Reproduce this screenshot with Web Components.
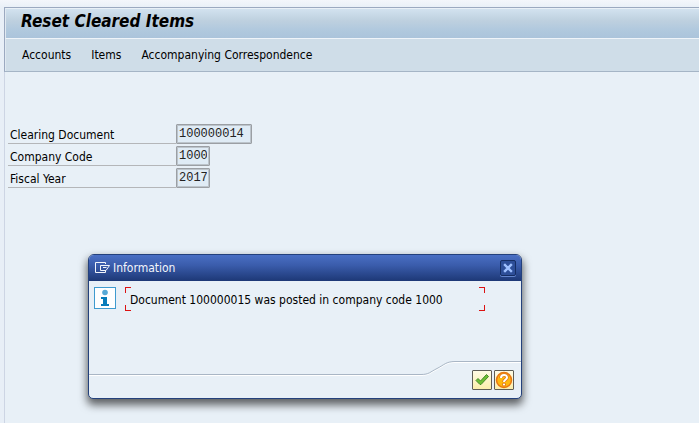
<!DOCTYPE html>
<html lang="en">
<head>
<meta charset="utf-8">
<title>Reset Cleared Items</title>
<style>
    html, body {
        height: 100%;
    }

    body {
        margin: 0;
        background: linear-gradient(#f3f6fb, #e8eff7 8px);
        color: #000;
        font: 12px/16px "DejaVu Sans Condensed", "DejaVu Sans", sans-serif;
        overflow: hidden;
    }
</style>
</head>
<body>
<sap-screen heading="Reset Cleared Items">
    <menu-link slot="menu">Accounts</menu-link>
    <menu-link slot="menu">Items</menu-link>
    <menu-link slot="menu">Accompanying Correspondence</menu-link>

    <form-field label="Clearing Document" value="100000014" size="long"></form-field>
    <form-field label="Company Code" value="1000"></form-field>
    <form-field label="Fiscal Year" value="2017"></form-field>

    <info-dialog slot="dialog" heading="Information">Document 100000015 was posted in company code 1000</info-dialog>
</sap-screen>

<template id="screen_template">
    <style>
        :host {
            display: block;
            position: relative;
            box-sizing: border-box;
            min-height: 100%;
            padding: 7px 0 0 4px;
        }

        .frame {
            box-sizing: border-box;
            min-height: calc(100vh - 7px);
            border-left: 1px solid #cdd5e4;
            background: #e8f0f7;
        }

        header {
            border: 1px solid #9ba9c0;
            border-width: 1px 0 1px 1px;
            border-bottom-color: #a5b5c6;
            margin-left: -1px;
            background: #cfdde8;
        }

        h1 {
            margin: 0;
            padding: 3px 15px 7px;
            border-top: 1px solid #e9f0f7;
            border-bottom: 1px solid #eff4f9;
            border-left: 1px solid #e0e9f1;
            background: linear-gradient(#d2e2ef, #bed0df 40%, #b1c9de 70%, #abc4db);
            font-size: 17px;
            line-height: 19px;
            font-style: italic;
            font-weight: bold;
        }

        nav {
            display: flex;
            gap: 20px;
            padding: 8px 16px;
            border-left: 1px solid #e0e9f1;
        }

        main {
            padding: 52px 0 0 3px;
            display: grid;
            gap: 2px;
        }
    </style>
    <div class="frame">
        <header>
            <h1></h1>
            <nav><slot name="menu"></slot></nav>
        </header>
        <main><slot></slot></main>
    </div>
    <slot name="dialog"></slot>
</template>

<template id="menu_template">
    <style>
        :host {
            display: block;
        }

        a {
            color: inherit;
            text-decoration: none;
        }
    </style>
    <a href="#"><slot></slot></a>
</template>

<template id="field_template">
    <style>
        :host {
            --field-width: 34px;
            display: flex;
            height: 20px;
        }

        :host([size="long"]) {
            --field-width: 76px;
        }

        label {
            box-sizing: border-box;
            width: 168px;
            padding: 3px 0 0 2px;
            border-bottom: 1px solid #b4b6b9;
        }

        input {
            box-sizing: border-box;
            width: var(--field-width);
            margin: 0;
            padding: 1px 2px;
            border: 1px solid #9b9fa4;
            border-radius: 1px;
            outline: none;
            background: #dfebf5;
            box-shadow: inset 0 0 0 1px #bcc4cb;
            color: #222;
            font: 12px/16px "Liberation Mono", monospace;
        }
    </style>
    <label for="f_input"></label>
    <input id="f_input" type="text" readonly>
</template>

<template id="dialog_template">
    <style>
        :host {
            position: absolute;
            top: 254px;
            left: 88px;
            display: block;
            box-sizing: border-box;
            width: 434px;
            border: 1px solid #24417c;
            border-radius: 6px 6px 5px 5px;
            background: #e8f0f7;
            box-shadow: 0 5px 9px 1px rgba(0, 0, 0, 0.6);
            overflow: hidden;
        }

        .title {
            display: flex;
            align-items: center;
            gap: 3px;
            height: 26px;
            padding: 0 5px 0 6px;
            background: linear-gradient(#4a6fc4, #3a5cab 40%, #1d3876);
            color: #f2f5fb;
        }

        h2 {
            flex: 1;
            margin: 0;
            font-size: 12px;
            font-weight: normal;
        }

        button {
            display: grid;
            place-items: center;
            box-sizing: border-box;
            margin: 0;
            padding: 0;
        }

        svg {
            display: block;
        }

        .close {
            width: 16px;
            height: 16px;
            border: 1px solid #152d63;
            border-radius: 2px;
            background: #2d4e98;
            box-shadow: 0 1px 0 #6283cb;
        }

        .content {
            display: flex;
            gap: 9px;
            min-height: 74px;
            padding: 6px 5px 0;
        }

        .message {
            display: grid;
            box-sizing: border-box;
            width: 360px;
            height: 24px;
            padding: 5px 5px 0;
            margin: 0;
            --red: linear-gradient(#dc1212, #dc1212);
            background:
                var(--red) 0 0 / 6px 1px, var(--red) 0 0 / 1px 6px,
                var(--red) 100% 0 / 6px 1px, var(--red) 100% 0 / 1px 6px,
                var(--red) 0 100% / 6px 1px, var(--red) 0 100% / 1px 6px,
                var(--red) 100% 100% / 6px 1px, var(--red) 100% 100% / 1px 6px;
            background-repeat: no-repeat;
            white-space: nowrap;
        }

        footer {
            display: grid;
            grid-template-columns: 1fr 34px 66px;
        }

        .low {
            height: 13px;
            border-bottom: 1px solid #a9b6c5;
            box-shadow: 0 1px 0 #fff;
        }

        .high {
            border-top: 1px solid #a9b6c5;
            box-shadow: inset 0 1px 0 #fff;
        }

        .actions {
            display: flex;
            justify-content: end;
            gap: 2px;
            padding: 8px 7px 8px 0;
        }

        .actions button {
            width: 20px;
            height: 20px;
            border: 1px solid #5f5d55;
            border-radius: 1px;
            background: linear-gradient(#fffbe4, #fbeeab);
        }
    </style>
    <div class="title">
        <svg width="15" height="12" viewBox="0 0 15 12" fill="none" stroke="#f2f5fb" stroke-width="1">
            <path d="M10.500 2V.5H.5v10h10V9"/>
            <path d="M5.500 8.500v-5h9L11 8.500H5.500M8 5.500h3.500"/>
        </svg>
        <h2></h2>
        <button class="close" type="button" aria-label="Close">
            <svg width="10" height="10" viewBox="0 0 10 10">
                <path d="M2 2l6 6M8 2L2 8" stroke="#9fc0ff" stroke-width="2.400" stroke-linecap="square"/>
            </svg>
        </button>
    </div>
    <div class="content">
        <svg width="22" height="22" viewBox="0 0 22 22">
            <rect x=".5" y=".5" width="21" height="21" fill="#fff" stroke="#3f9bcf"/>
            <circle cx="11" cy="5.500" r="2.800" fill="#57a9d6"/>
            <path d="M7 10h6v7h2v2H7v-2h2v-5H7z" fill="#087cba"/>
        </svg>
        <p class="message"><slot></slot></p>
    </div>
    <footer>
        <div class="low"></div>
        <svg width="34" height="15" viewBox="0 0 34 15" fill="none">
            <path d="M0 14.500C8 14.500 9 12 16 8.500S25 1.500 34 1.500" stroke="#fff"/>
            <path d="M0 13.500C8 13.500 9 11 16 7.500S25 .5 34 .5" stroke="#a9b6c5"/>
        </svg>
        <div class="high">
            <div class="actions">
                <button type="button" aria-label="Continue">
                    <svg width="16" height="16" viewBox="0 0 16 16">
                        <path d="M2 8.500l2-2 2.500 2.500L12.500 2.500l2 2L7 12.500H6z" fill="#6fbe35" stroke="#458a28"/>
                    </svg>
                </button>
                <button type="button" aria-label="Help">
                    <svg width="18" height="18" viewBox="0 0 18 18">
                        <circle cx="9" cy="9" r="7.500" fill="#ffb90e" stroke="#e97712" stroke-width="1.500"/>
                        <path d="M6 7c0-4 6-4 6-.5C12 8.500 9 8.500 9 11" fill="none" stroke="#e27a1c" stroke-width="3.600"/>
                        <circle cx="9" cy="13.500" r="1.900" fill="#e27a1c"/>
                        <path d="M6 7c0-4 6-4 6-.5C12 8.500 9 8.500 9 11" fill="none" stroke="#fff" stroke-width="2"/>
                        <circle cx="9" cy="13.500" r="1.100" fill="#fff"/>
                    </svg>
                </button>
            </div>
        </div>
    </footer>
</template>

<script>
    class TemplateElement extends HTMLElement {
        constructor(templateId) {
            super();
            const template = document.getElementById(templateId);
            this.attachShadow({mode: "open"});
            this.shadowRoot.append(template.content.cloneNode(true));
        }
    }

    class SapScreen extends TemplateElement {
        constructor() {
            super("screen_template");
        }

        connectedCallback() {
            this.shadowRoot.querySelector("h1").textContent = this.getAttribute("heading");
        }
    }

    class MenuLink extends TemplateElement {
        constructor() {
            super("menu_template");
        }
    }

    class FormField extends TemplateElement {
        constructor() {
            super("field_template");
        }

        connectedCallback() {
            this.shadowRoot.querySelector("label").textContent = this.getAttribute("label");
            this.shadowRoot.getElementById("f_input").value = this.getAttribute("value");
        }
    }

    class InfoDialog extends TemplateElement {
        constructor() {
            super("dialog_template");
            this.close = () => this.remove();
        }

        connectedCallback() {
            this.setAttribute("role", "dialog");
            this.shadowRoot.querySelector("h2").textContent = this.getAttribute("heading");
            this.shadowRoot.querySelector(".close").addEventListener("click", this.close);
        }
    }

    customElements.define("sap-screen", SapScreen);
    customElements.define("menu-link", MenuLink);
    customElements.define("form-field", FormField);
    customElements.define("info-dialog", InfoDialog);
</script>
</body>
</html>
